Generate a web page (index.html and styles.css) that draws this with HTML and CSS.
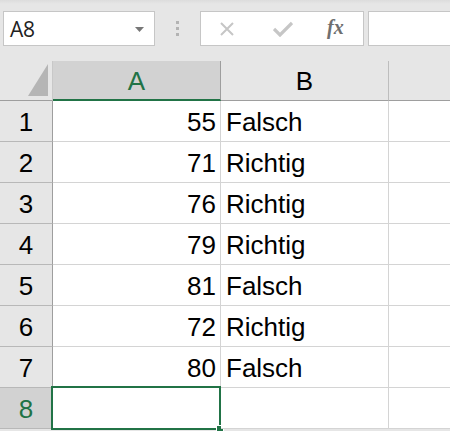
FILE: index.html
```html
<!DOCTYPE html>
<html>
<head>
<meta charset="utf-8">
<link rel="stylesheet" href="styles.css">
</head>
<body>
<div class="app">
  <div class="fbar">
    <div class="namebox">
      <span class="ref">A8</span>
      <svg class="caret" width="9" height="5" viewBox="0 0 9 5"><path d="M0 0H9L4.5 5Z" fill="#777"/></svg>
    </div>
    <div class="grip"><i></i><i></i><i></i></div>
    <div class="fbtns">
      <svg class="ic" width="16" height="16" viewBox="0 0 16 16"><path d="M2 2L14 14M14 2L2 14" stroke="#c6c6c6" stroke-width="2" fill="none"/></svg>
      <svg class="ic" width="20" height="16" viewBox="0 0 20 16"><path d="M1 8L7 14L19 2" stroke="#c6c6c6" stroke-width="3.2" fill="none"/></svg>
      <span class="fx">fx</span>
    </div>
    <div class="finput"></div>
  </div>
  <div class="sheet">
    <div class="row hdr">
      <div class="rh corner"><svg width="20" height="32" viewBox="0 0 20 32"><path d="M20 0V32H0Z" fill="#b5b5b5"/></svg></div>
      <div class="ch sel">A</div>
      <div class="ch">B</div>
      <div class="ch last"></div>
    </div>
    <div class="row"><div class="rh">1</div><div class="c num">55</div><div class="c">Falsch</div><div class="c last"></div></div>
    <div class="row"><div class="rh">2</div><div class="c num">71</div><div class="c">Richtig</div><div class="c last"></div></div>
    <div class="row"><div class="rh">3</div><div class="c num">76</div><div class="c">Richtig</div><div class="c last"></div></div>
    <div class="row"><div class="rh">4</div><div class="c num">79</div><div class="c">Richtig</div><div class="c last"></div></div>
    <div class="row"><div class="rh">5</div><div class="c num">81</div><div class="c">Falsch</div><div class="c last"></div></div>
    <div class="row"><div class="rh">6</div><div class="c num">72</div><div class="c">Richtig</div><div class="c last"></div></div>
    <div class="row"><div class="rh">7</div><div class="c num">80</div><div class="c">Falsch</div><div class="c last"></div></div>
    <div class="row"><div class="rh selrow">8</div><div class="c active"><div class="selbox"></div><div class="handle"></div></div><div class="c"></div><div class="c last"></div></div>
  </div>
</div>
</body>
</html>
```
FILE: styles.css
```css
html, body {
  margin: 0;
  padding: 0;
  background: #e6e6e6;
  overflow: hidden;
}
.app {
  width: 450px;
  height: 431px;
  overflow: hidden;
  font-family: "Liberation Sans", Arial, sans-serif;
  background: linear-gradient(#dcdcdc 0, #e6e6e6 4px);
}
.fbar {
  display: flex;
  align-items: stretch;
  height: 35px;
  padding-top: 11px;
  padding-bottom: 15px;
}
.namebox {
  box-sizing: border-box;
  margin-left: 3px;
  width: 152px;
  background: #fff;
  border: 1px solid #c6c6c6;
  display: flex;
  align-items: center;
  justify-content: space-between;
  padding: 0 10px 0 6px;
}
.ref {
  font-family: "Open Sans", "Liberation Sans", sans-serif;
  font-size: 21px;
  color: #222;
  letter-spacing: -0.3px;
}
.caret { margin-top: 1px; }
.grip {
  width: 45px;
  display: flex;
  flex-direction: column;
  align-items: center;
  justify-content: center;
  gap: 3px;
}
.grip i {
  display: block;
  width: 3px;
  height: 3px;
  background: #b3b3b3;
}
.fbtns {
  box-sizing: border-box;
  width: 164px;
  background: #fff;
  border: 1px solid #c6c6c6;
  display: flex;
  align-items: center;
  padding-left: 18px;
  gap: 32px;
}
.fbtns .ic:nth-child(2) { margin-left: 6px; }
.fx {
  font-family: "Liberation Serif", "Times New Roman", serif;
  font-style: italic;
  font-size: 20px;
  font-weight: bold;
  color: #6f6f6f;
  margin-left: 2px;
  margin-top: -3px;
}
.finput {
  box-sizing: border-box;
  margin-left: 4px;
  flex: 1;
  background: #fff;
  border: 1px solid #c6c6c6;
  border-right: none;
}
.sheet {
  display: flex;
  flex-direction: column;
}
.row {
  display: flex;
  height: 41px;
}
.row.hdr { height: 40px; }
.rh {
  box-sizing: border-box;
  width: 53px;
  flex: none;
  border-right: 1px solid #9e9e9e;
  border-bottom: 1px solid #b8b8b8;
  background: #e6e6e6;
  display: flex;
  align-items: center;
  justify-content: center;
  font-size: 26px;
  color: #000;
  padding-top: 2px;
}
.rh.corner {
  border-bottom: 1px solid #9e9e9e;
  justify-content: flex-end;
  align-items: flex-end;
  padding: 0 4px 4px 0;
  border-right: 1px solid #c8c8c8;
}
.rh.selrow {
  background: #d2d2d2;
  color: #217346;
}
.ch {
  box-sizing: border-box;
  width: 168px;
  flex: none;
  border-right: 1px solid #bdbdbd;
  border-bottom: 1px solid #9e9e9e;
  display: flex;
  align-items: center;
  justify-content: center;
  font-size: 26px;
  color: #000;
  padding-top: 2px;
}
.ch.sel {
  background: #d2d2d2;
  color: #217346;
  border-right: 1px solid #9e9e9e;
  border-bottom: 2px solid #217346;
}
.ch.last, .c.last {
  flex: 1;
  border-right: none;
}
.c {
  box-sizing: border-box;
  width: 168px;
  flex: none;
  background: #fff;
  border-right: 1px solid #d4d4d4;
  border-bottom: 1px solid #d4d4d4;
  display: flex;
  align-items: flex-end;
  padding: 0 0 3px 5px;
  font-size: 26px;
  color: #000;
  position: relative;
}
.c.num {
  justify-content: flex-end;
  padding: 0 4px 3px 0;
}
.selbox {
  position: absolute;
  left: -2px;
  top: -2px;
  right: -1px;
  bottom: -2px;
  border: 2px solid #217346;
}
.handle {
  position: absolute;
  right: -4px;
  bottom: -5px;
  width: 6px;
  height: 6px;
  background: #217346;
  border: 1px solid #fff;
}
```
